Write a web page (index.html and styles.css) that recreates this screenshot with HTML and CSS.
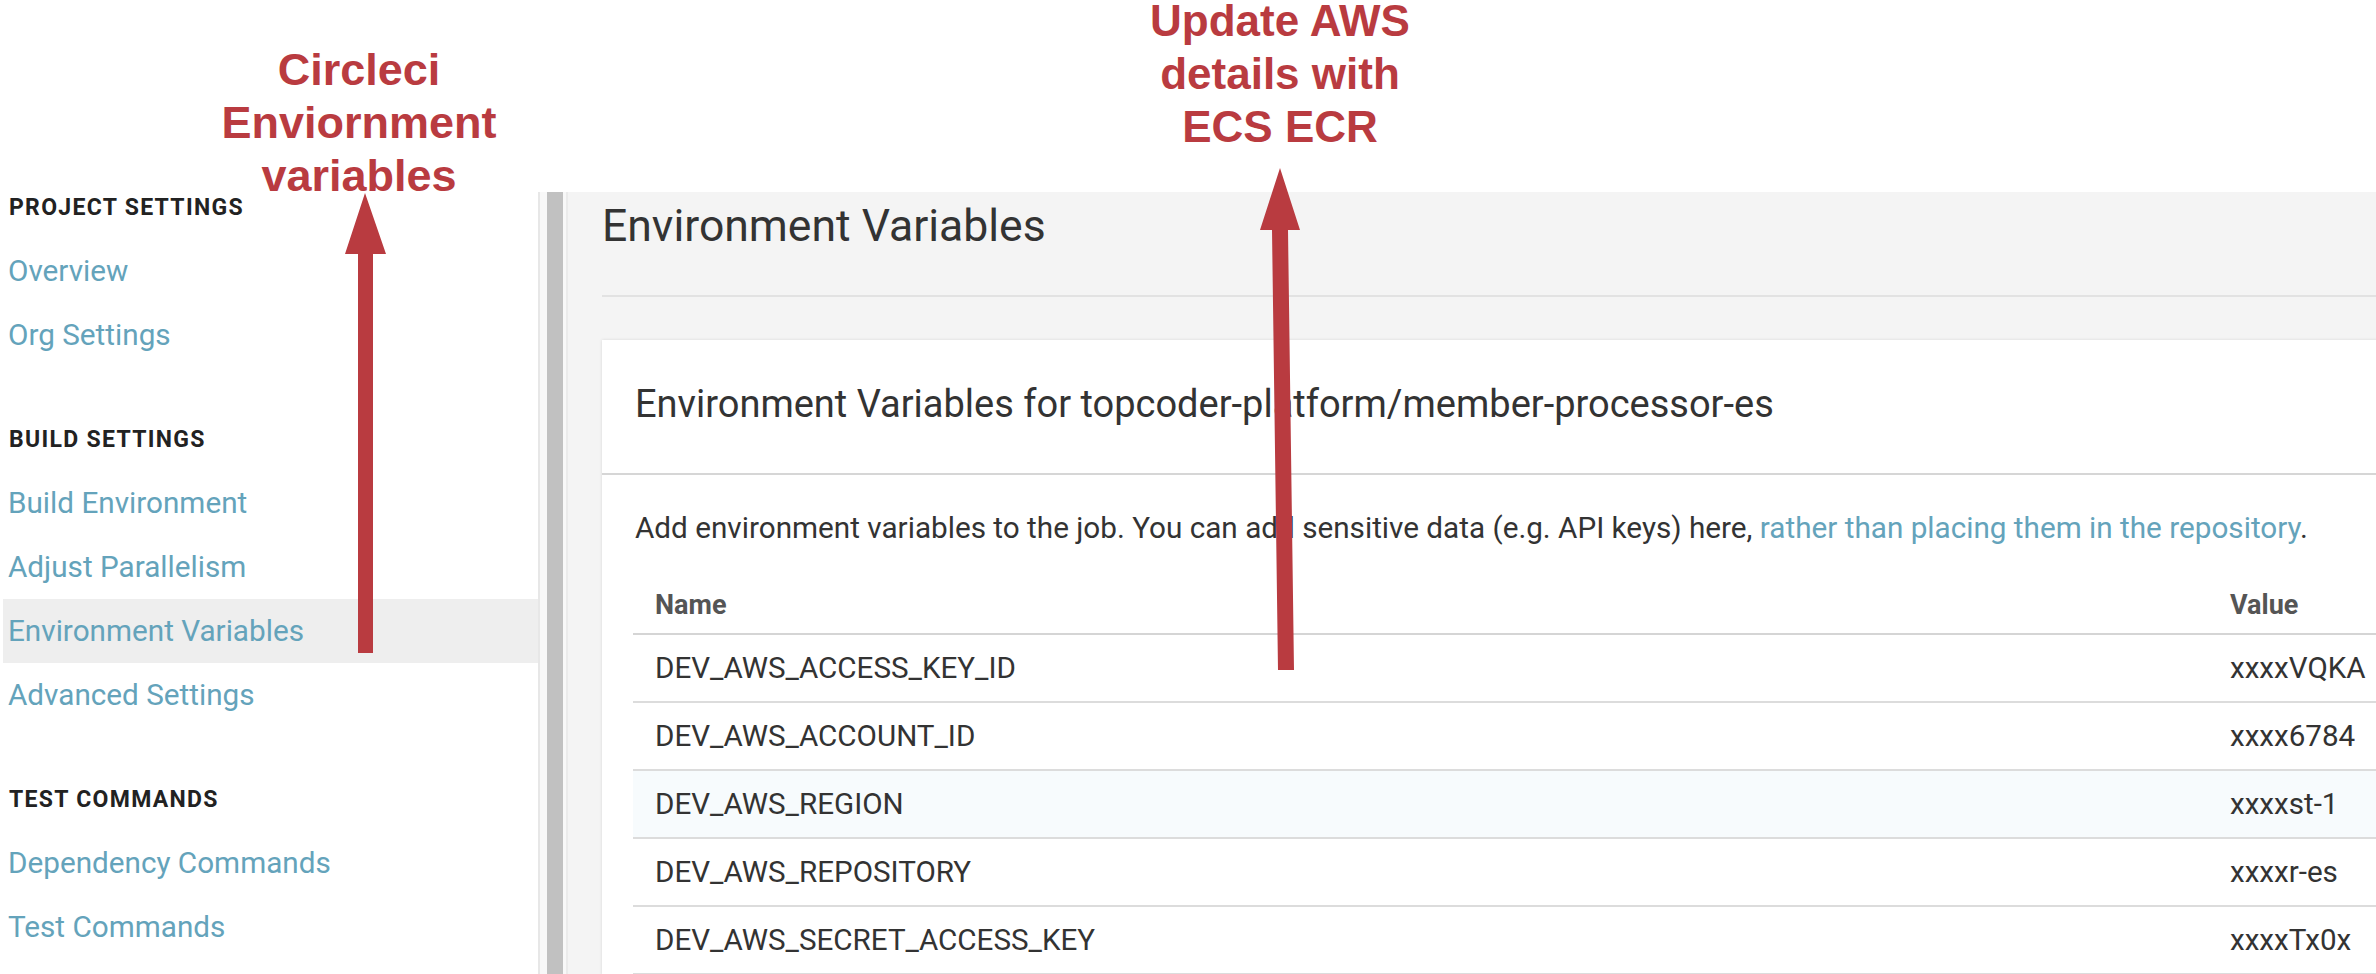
FILE: index.html
```html
<!DOCTYPE html>
<html lang="en">
<head>
<meta charset="utf-8">
<title>Environment Variables</title>
<link rel="stylesheet" href="styles.css">
</head>
<body>
<div class="page">
  <div class="top-band"></div>
  <div class="app">
    <aside class="sidebar">
      <section class="nav-group">
        <h3 class="nav-heading">Project Settings</h3>
        <ul class="nav-list">
          <li><a class="nav-link" href="#">Overview</a></li>
          <li><a class="nav-link" href="#">Org Settings</a></li>
        </ul>
      </section>
      <section class="nav-group">
        <h3 class="nav-heading">Build Settings</h3>
        <ul class="nav-list">
          <li><a class="nav-link" href="#">Build Environment</a></li>
          <li><a class="nav-link" href="#">Adjust Parallelism</a></li>
          <li><a class="nav-link active" href="#">Environment Variables</a></li>
          <li><a class="nav-link" href="#">Advanced Settings</a></li>
        </ul>
      </section>
      <section class="nav-group">
        <h3 class="nav-heading">Test Commands</h3>
        <ul class="nav-list">
          <li><a class="nav-link" href="#">Dependency Commands</a></li>
          <li><a class="nav-link" href="#">Test Commands</a></li>
        </ul>
      </section>
    </aside>
    <div class="rail"><div class="rail-thumb"></div></div>
    <main class="main">
      <h1 class="page-title">Environment Variables</h1>
      <hr class="page-rule">
      <div class="card">
        <div class="card-header">
          <h2 class="card-title">Environment Variables for topcoder-platform/member-processor-es</h2>
        </div>
        <div class="card-body">
          <p class="intro">Add environment variables to the job. You can add sensitive data (e.g. API keys) here, <a class="link" href="#">rather than placing them in the repository</a>.</p>
          <table class="vars">
            <thead>
              <tr><th class="col-name">Name</th><th class="col-value">Value</th></tr>
            </thead>
            <tbody>
              <tr><td>DEV_AWS_ACCESS_KEY_ID</td><td>xxxxVQKA</td></tr>
              <tr><td>DEV_AWS_ACCOUNT_ID</td><td>xxxx6784</td></tr>
              <tr class="hover"><td>DEV_AWS_REGION</td><td>xxxxst-1</td></tr>
              <tr><td>DEV_AWS_REPOSITORY</td><td>xxxxr-es</td></tr>
              <tr><td>DEV_AWS_SECRET_ACCESS_KEY</td><td>xxxxTx0x</td></tr>
            </tbody>
          </table>
        </div>
      </div>
    </main>
  </div>

  <div class="note note-left">Circleci<br>Enviornment<br>variables</div>
  <div class="note note-right">Update AWS<br>details with<br>ECS ECR</div>
  <svg class="arrows" width="2376" height="974" viewBox="0 0 2376 974">
    <polygon fill="#b93b40" points="365,193 386,254 373,254 373,653 358,653 358,254 345,254"/>
    <polygon fill="#b93b40" points="1280,168 1300,230 1288,230 1294,670 1278,670 1272,230 1260,230"/>
  </svg>
</div>
</body>
</html>
```

FILE: styles.css
```css
html, body {
  margin: 0;
  padding: 0;
  background: #ffffff;
}

body {
  font-family: Roboto, "Noto Sans", "Liberation Sans", sans-serif;
  color: #333333;
}

.page {
  position: relative;
  width: 2376px;
  height: 974px;
  overflow: hidden;
  background: #ffffff;
}

.top-band {
  height: 192px;
}

.app {
  display: flex;
  height: 782px;
}

/* Sidebar */
.sidebar {
  width: 538px;
  flex: none;
  box-sizing: border-box;
  padding: 1px 0 0 3px;
  background: #ffffff;
}

.nav-heading {
  margin: 0;
  padding-left: 6px;
  font-size: 23px;
  line-height: 30px;
  font-weight: 700;
  letter-spacing: 1.3px;
  text-transform: uppercase;
  color: #222222;
}

.nav-list {
  list-style: none;
  margin: 16px 0 58px;
  padding: 0;
}

.nav-link {
  display: block;
  height: 64px;
  line-height: 64px;
  padding-left: 5px;
  font-size: 29.7px;
  color: #64a3bb;
  text-decoration: none;
}

.nav-link.active {
  background: #eeeeee;
}

/* Scroll rail */
.rail {
  width: 30px;
  flex: none;
  box-sizing: border-box;
  display: flex;
  padding-left: 7px;
  border-left: 2px solid #e7e7e7;
  border-right: 2px solid #ebebeb;
  background: #f8f8f8;
}

.rail-thumb {
  width: 16px;
  background: #c1c1c1;
}

/* Main */
.main {
  flex: 1;
  min-width: 0;
  overflow: hidden;
  background: #f4f4f4;
  padding: 7px 0 0 34px;
}

.page-title {
  margin: 0;
  font-size: 44.5px;
  line-height: 54px;
  font-weight: 400;
  color: #333333;
}

.page-rule {
  margin: 42px 0 0;
  height: 2px;
  border: 0;
  background: #e2e2e2;
}

.card {
  margin-top: 43px;
  width: 1900px;
  background: #ffffff;
  box-shadow: 0 0 3px rgba(0, 0, 0, 0.12);
}

.card-header {
  padding: 43px 33px 47px;
  border-bottom: 2px solid #d6d6d6;
}

.card-title {
  margin: 0;
  font-size: 38px;
  line-height: 43px;
  font-weight: 400;
  color: #333333;
}

.card-body {
  padding: 31px 0 0 31px;
}

.intro {
  margin: 0 0 17px 2px;
  font-size: 29.7px;
  line-height: 43.5px;
  color: #333333;
}

.link {
  color: #64a3bb;
  text-decoration: none;
}

.vars {
  width: 1800px;
  border-collapse: collapse;
}

.vars th {
  text-align: left;
  padding: 23px 22px 13px;
  font-size: 27px;
  line-height: 30px;
  font-weight: 700;
  color: #555555;
  border-bottom: 2px solid #d5d5d5;
}

.vars .col-name {
  width: 1531px;
}

.vars td {
  padding: 16px 22px;
  font-size: 29.6px;
  line-height: 34px;
  color: #333333;
  border-bottom: 2px solid #dcdcdc;
}

.vars tr.hover td {
  background: #f7fbfd;
}

/* Annotations */
.note {
  position: absolute;
  font-family: "Liberation Sans", Arial, sans-serif;
  font-weight: 700;
  color: #b93b40;
  text-align: center;
  width: 500px;
}

.note-left {
  left: 109px;
  top: 43px;
  font-size: 45px;
  line-height: 53px;
}

.note-right {
  left: 1030px;
  top: -6px;
  font-size: 44px;
  line-height: 53px;
}

.arrows {
  position: absolute;
  left: 0;
  top: 0;
  pointer-events: none;
}
```
